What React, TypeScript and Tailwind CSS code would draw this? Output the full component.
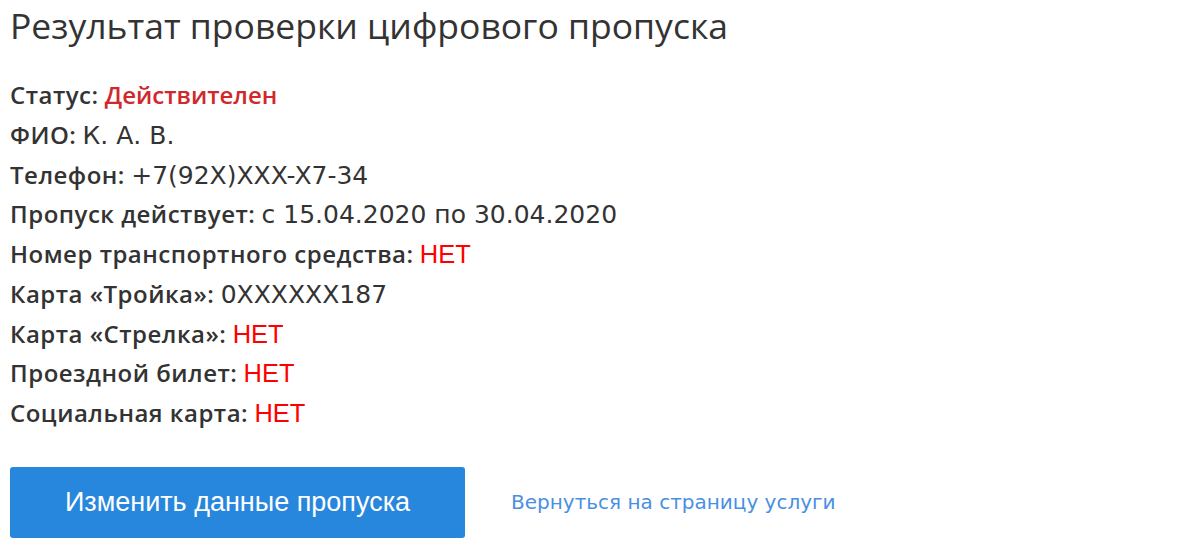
const rows: { label: string; value: string; kind?: 'status' | 'no' }[] = [
  { label: 'Статус:', value: 'Действителен', kind: 'status' },
  { label: 'ФИО:', value: 'К. А. В.' },
  { label: 'Телефон:', value: '+7(92X)XXX-X7-34' },
  { label: 'Пропуск действует:', value: 'с 15.04.2020 по 30.04.2020' },
  { label: 'Номер транспортного средства:', value: 'НЕТ', kind: 'no' },
  { label: 'Карта «Тройка»:', value: '0XXXXXX187' },
  { label: 'Карта «Стрелка»:', value: 'НЕТ', kind: 'no' },
  { label: 'Проездной билет:', value: 'НЕТ', kind: 'no' },
  { label: 'Социальная карта:', value: 'НЕТ', kind: 'no' },
];

export default function App() {
  return (
    <div className="min-h-[554px] bg-white px-[10px] text-[#333] font-['Open_Sans',sans-serif]">
      <h1 className="pt-[1px] text-[35.5px] leading-[48px] font-medium">Результат проверки цифрового пропуска</h1>

      <div className="mt-[26px]">
        {rows.map((row) => (
          <div key={row.label} className="h-[39.75px] text-[24px] leading-[39.75px] whitespace-nowrap">
            <span className="font-semibold tracking-[0.5px]">{row.label}</span>{' '}
            {row.kind === 'status' && <span className="font-semibold text-[#d0282b]">{row.value}</span>}
            {row.kind === 'no' && (
              <span className="font-['Liberation_Sans',sans-serif] text-[25.5px] text-[#ff0000]">{row.value}</span>
            )}
            {!row.kind && <span className="font-['DejaVu_Sans',sans-serif] text-[25px]">{row.value}</span>}
          </div>
        ))}
      </div>

      <div className="mt-[34px] flex items-center gap-[46px]">
        <button className="h-[71px] w-[455px] rounded-[3px] bg-[#2787dd] text-[27px] text-white font-['Liberation_Sans',sans-serif]">
          Изменить данные пропуска
        </button>
        <a href="#" className="font-['DejaVu_Sans',sans-serif] text-[20px] text-[#4a90e2]">
          Вернуться на страницу услуги
        </a>
      </div>
    </div>
  );
}
